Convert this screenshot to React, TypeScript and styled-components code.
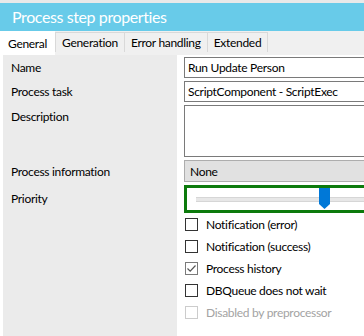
import React from "react";
import styled, { createGlobalStyle } from "styled-components";

const GlobalStyle = createGlobalStyle`
  html, body {
    margin: 0;
    padding: 0;
    background: #ffffff;
    overflow: hidden;
  }
  body {
    font-family: Lato, "Noto Sans", sans-serif;
    font-size: 12px;
    letter-spacing: -0.3px;
    color: #000;
  }
`;

const Window = styled.div`
  width: 364px;
  height: 336px;
  display: flex;
  flex-direction: column;
  border-top: 3px solid #e9e9e9;
  box-sizing: border-box;
  overflow: hidden;
`;

const TitleBar = styled.div`
  height: 28px;
  background: #68cbe9;
  color: #ffffff;
  font-size: 16px;
  letter-spacing: -0.4px;
  display: flex;
  align-items: center;
  padding-left: 12px;
  padding-bottom: 1px;
  box-sizing: border-box;
  flex-shrink: 0;
`;

const TabStrip = styled.div`
  height: 24px;
  background: #f0f0f0;
  display: flex;
  align-items: flex-end;
  flex-shrink: 0;
`;

const Tab = styled.div<{ $active?: boolean }>`
  height: ${(p) => (p.$active ? "24px" : "20px")};
  margin-bottom: ${(p) => (p.$active ? "0" : "3px")};
  padding: 0 ${(p) => (p.$active ? "7px" : "6px")};
  background: ${(p) => (p.$active ? "#ffffff" : "#f0f0f0")};
  border: 1px solid ${(p) => (p.$active ? "#ffffff" : "#d9d9d9")};
  border-bottom: none;
  margin-left: ${(p) => (p.$active ? "0" : "-1px")};
  display: flex;
  align-items: center;
  box-sizing: border-box;
  white-space: nowrap;
`;

const Form = styled.div`
  flex: 1;
  display: grid;
  grid-template-columns: 174px 1fr;
  column-gap: 7px;
  margin-left: 3px;
  overflow: hidden;
`;

const LabelCell = styled.div<{ $top?: boolean }>`
  background: #ebebeb;
  display: flex;
  align-items: ${(p) => (p.$top ? "flex-start" : "center")};
  padding-left: 8px;
  padding-top: ${(p) => (p.$top ? "5px" : "0")};
  white-space: nowrap;
`;

const Filler = styled.div`
  background: #ebebeb;
  height: 100%;
`;

const FieldCell = styled.div<{ $pt?: number; $pb?: number }>`
  padding-top: ${(p) => p.$pt ?? 1.5}px;
  padding-bottom: ${(p) => p.$pb ?? 1.5}px;
  min-width: 0;
`;

const TextBox = styled.div<{ $h?: number }>`
  height: ${(p) => p.$h ?? 21}px;
  width: 260px;
  border: 1px solid #7a7a7a;
  border-right: none;
  background: #fff;
  box-sizing: border-box;
  padding-left: 3px;
  display: flex;
  align-items: center;
  white-space: nowrap;
`;

const TextArea = styled(TextBox)`
  align-items: flex-start;
`;

const Select = styled(TextBox)`
  background: #e1e1e1;
  border-color: #adadad;
  padding-left: 5px;
`;

const SliderBox = styled.div`
  height: 28px;
  width: 260px;
  border: 3px solid #0c7a0c;
  border-right: none;
  box-sizing: border-box;
  background: #fff;
  position: relative;
`;

const Track = styled.div`
  position: absolute;
  left: 9px;
  right: 0;
  top: 9px;
  height: 3px;
  background: #e7e7e7;
  border-top: 1px solid #d6d6d6;
  border-bottom: 1px solid #d6d6d6;
`;

const Thumb = styled.svg`
  position: absolute;
  left: 132px;
  top: 0px;
`;

const CheckRow = styled.label<{ $disabled?: boolean }>`
  height: 22px;
  display: flex;
  align-items: center;
  gap: 8px;
  padding-left: 1px;
  color: ${(p) => (p.$disabled ? "#a3a3a3" : "#000")};
  white-space: nowrap;
`;

const Box = styled.span<{ $tone?: string }>`
  width: 13px;
  height: 13px;
  box-sizing: border-box;
  border: 1px solid ${(p) => p.$tone ?? "#333"};
  background: #fff;
  display: flex;
  align-items: center;
  justify-content: center;
`;

const checks = [
  { label: "Notification (error)" },
  { label: "Notification (success)" },
  { label: "Process history", checked: true },
  { label: "DBQueue does not wait" },
  { label: "Disabled by preprocessor", disabled: true },
];

export default function App() {
  return (
    <>
      <GlobalStyle />
      <Window>
        <TitleBar>Process step properties</TitleBar>
        <TabStrip>
          <Tab $active>General</Tab>
          <Tab style={{ marginLeft: 0 }}>Generation</Tab>
          <Tab>Error handling</Tab>
          <Tab>Extended</Tab>
        </TabStrip>
        <Form>
          <LabelCell>Name</LabelCell>
          <FieldCell $pt={2}>
            <TextBox>Run Update Person</TextBox>
          </FieldCell>

          <LabelCell>Process task</LabelCell>
          <FieldCell>
            <TextBox>ScriptComponent - ScriptExec</TextBox>
          </FieldCell>

          <LabelCell $top>Description</LabelCell>
          <FieldCell>
            <TextArea $h={52} />
          </FieldCell>

          <LabelCell>Process information</LabelCell>
          <FieldCell>
            <Select $h={22}>None</Select>
          </FieldCell>

          <LabelCell>Priority</LabelCell>
          <FieldCell $pb={0}>
            <SliderBox>
              <Track />
              <Thumb width="11" height="21" viewBox="0 0 11 21">
                <path d="M0 0 H11 V16 L5.5 21 L0 16 Z" fill="#0078d7" />
              </Thumb>
            </SliderBox>
          </FieldCell>

          {checks.map((c) => (
            <React.Fragment key={c.label}>
              <Filler />
              <CheckRow $disabled={c.disabled}>
                <Box $tone={c.disabled ? "#cccccc" : c.checked ? "#7a7a7a" : "#333"}>
                  {c.checked && (
                    <svg width="11" height="11" viewBox="0 0 11 11">
                      <path
                        d="M1.5 5.5 L4.2 8.2 L9.5 2.5"
                        fill="none"
                        stroke="#555"
                        strokeWidth="1.2"
                      />
                    </svg>
                  )}
                </Box>
                {c.label}
              </CheckRow>
            </React.Fragment>
          ))}
          <Filler style={{ height: 40 }} />
          <div />
        </Form>
      </Window>
    </>
  );
}
